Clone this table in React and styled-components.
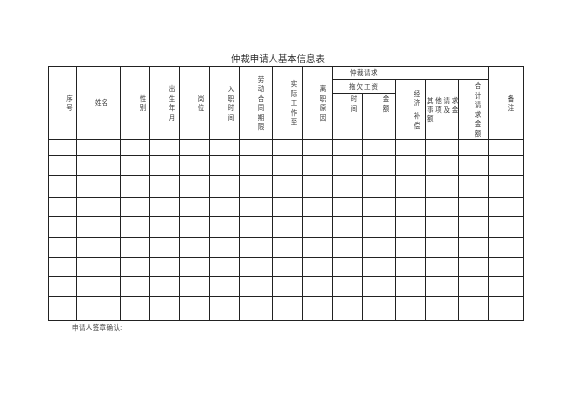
import React from 'react';
import styled, { createGlobalStyle } from 'styled-components';

const GlobalStyle = createGlobalStyle`
  html, body {
    margin: 0;
    padding: 0;
    background: #fff;
  }
  body {
    font-family: "Noto Sans CJK SC", "Noto Sans", sans-serif;
  }
`;

const Page = styled.div`
  padding: 50px 0 0 48px;
  width: 476px;
  will-change: transform;
`;

const Title = styled.div`
  height: 16px;
  line-height: 16px;
  padding-right: 16px;
  text-align: center;
  font-size: 9.4px;
  color: #2a2a2a;
`;

const Sheet = styled.table`
  border-collapse: separate;
  border-spacing: 0;
  table-layout: fixed;
  width: 476px;
  border-top: 1px solid #222;
  border-left: 1px solid #222;
  color: #3a3a3a;
  font-size: 6.5px;
`;

const Row = styled.tr`
  height: ${p => p.$h}px;
`;

const Cell = styled.td`
  border-right: 1px solid #222;
  border-bottom: 1px solid #222;
  padding: 0;
  box-sizing: border-box;
`;

const HeadCell = styled.th`
  border-right: 1px solid #222;
  border-bottom: 1px solid #222;
  box-sizing: border-box;
  font-weight: normal;
  line-height: 9.5px;
  text-align: ${p => p.$align || 'center'};
  vertical-align: ${p => (p.$top ? 'top' : 'middle')};
  padding: 0 0 0 ${p => p.$shift || 0}px;
  letter-spacing: ${p => p.$spacing || 0}px;
  white-space: nowrap;
`;

const Stack = styled.span`
  display: inline-block;
  width: 1em;
  text-align: center;
  vertical-align: middle;
`;

const Glyph = styled.span`
  display: block;
  height: 9.5px;
`;

const Gap = styled.span`
  display: block;
  height: 3.5px;
`;

const Lines = styled.span`
  display: block;
  letter-spacing: 1.75px;
  line-height: 9px;
`;

const Footer = styled.div`
  padding-left: 24px;
  margin-top: 1px;
  line-height: 10px;
  font-size: 6.5px;
  letter-spacing: 0.4px;
  color: #444;
`;

const cols = [28, 44, 29, 30, 30, 30, 33, 30, 30, 30, 33, 30, 33, 30, 35];
const bodyRows = [16, 20, 22, 19, 21, 20, 19, 20, 24];

const VText = ({ text }) => (
  <Stack>
    {text.split('').map((c, i) =>
      c === ' ' ? <Gap key={i} /> : <Glyph key={i}>{c}</Glyph>
    )}
  </Stack>
);

const App = () => {
  return (
    <>
      <GlobalStyle />
      <Page>
        <Title>仲裁申请人基本信息表</Title>
        <Sheet>
          <colgroup>
            {cols.map((w, i) => <col key={i} style={{ width: w }} />)}
          </colgroup>
          <thead>
            <Row $h={13}>
              <HeadCell rowSpan={3} $shift={14}><VText text="序号" /></HeadCell>
              <HeadCell rowSpan={3} $shift={6}>姓名</HeadCell>
              <HeadCell rowSpan={3} $shift={16}><VText text="性别" /></HeadCell>
              <HeadCell rowSpan={3} $shift={15}><VText text="出生年月" /></HeadCell>
              <HeadCell rowSpan={3} $shift={13}><VText text="岗位" /></HeadCell>
              <HeadCell rowSpan={3} $shift={13}><VText text="入职时间" /></HeadCell>
              <HeadCell rowSpan={3} $shift={10}><VText text="劳动合同期限" /></HeadCell>
              <HeadCell rowSpan={3} $shift={13}><VText text="实际工作至" /></HeadCell>
              <HeadCell rowSpan={3} $shift={11}><VText text="离职原因" /></HeadCell>
              <HeadCell colSpan={5} $align="left" $shift={17} $spacing={0.5}>仲裁请求</HeadCell>
              <HeadCell rowSpan={3} $shift={10}><VText text="备注" /></HeadCell>
            </Row>
            <Row $h={14}>
              <HeadCell colSpan={2} $spacing={1}>拖欠工资</HeadCell>
              <HeadCell rowSpan={2} $shift={13}><VText text="经济 补偿" /></HeadCell>
              <HeadCell rowSpan={2} $align="left" $shift={1}>
                <Lines>其他请求</Lines>
                <Lines>事项及金</Lines>
                <Lines>额</Lines>
              </HeadCell>
              <HeadCell rowSpan={2} $shift={9}><VText text="合计请求金额" /></HeadCell>
            </Row>
            <Row $h={46}>
              <HeadCell $top $shift={13}><VText text="时间" /></HeadCell>
              <HeadCell $top $shift={14}><VText text="金额" /></HeadCell>
            </Row>
          </thead>
          <tbody>
            {bodyRows.map((h, r) => (
              <Row key={r} $h={h}>
                {cols.map((_, c) => <Cell key={c} />)}
              </Row>
            ))}
          </tbody>
        </Sheet>
        <Footer>申请人签章确认:</Footer>
      </Page>
    </>
  );
};

export default App;
